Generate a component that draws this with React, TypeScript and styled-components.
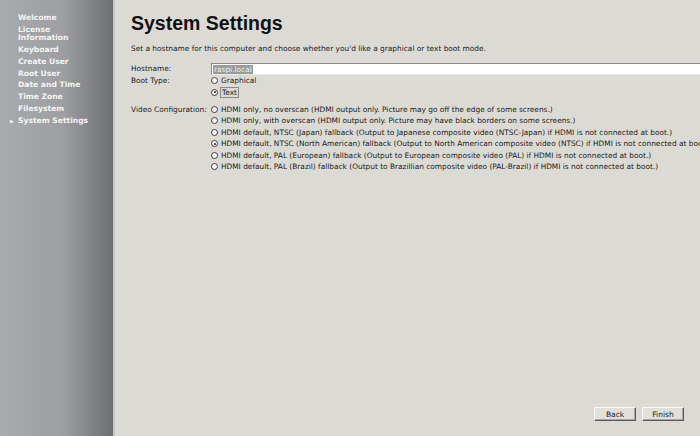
import React from "react";
import styled, { createGlobalStyle } from "styled-components";

const Global = createGlobalStyle`
  html, body { margin: 0; padding: 0; overflow: hidden; }
  body { background: #dcdad5; font-family: "DejaVu Sans", sans-serif; }
`;

const Window = styled.div`
  display: flex;
  width: 700px;
  height: 436px;
  overflow: hidden;
`;

const Sidebar = styled.nav`
  flex: 0 0 115px;
  background: linear-gradient(to right, #a8abae 0%, #9d9fa2 55%, #6d6e72 100%);
  border-right: 2px solid #c4c4c0;
  padding-top: 14px;
  box-sizing: border-box;
  display: flex;
  flex-direction: column;
  gap: 3.4px;
`;

const NavItem = styled.div<{ $active?: boolean }>`
  position: relative;
  padding-left: 18px;
  padding-right: 20px;
  color: #f4f4f4;
  font-weight: bold;
  font-size: 7.6px;
  line-height: 8.4px;
`;

const Arrow = styled.span`
  position: absolute;
  left: 10px;
  top: 0;
  font-size: 5px;
  color: #f4f4f4;
`;

const Main = styled.main`
  flex: 1;
  min-width: 0;
  padding: 11px 0 0 16px;
  display: flex;
  flex-direction: column;
  color: #1a1a1a;
  font-size: 7.4px;
  white-space: nowrap;
`;

const Title = styled.h1`
  margin: 0;
  font-family: "Liberation Sans", Arial, sans-serif;
  font-weight: bold;
  font-size: 19.5px;
  line-height: 24px;
  color: #111;
`;

const Description = styled.p`
  margin: 9px 0 0;
  line-height: 10px;
`;

const Form = styled.div`
  margin-top: 9px;
  display: grid;
  grid-template-columns: 80px 1fr;
  row-gap: 0;
  align-items: start;
`;

const Label = styled.div<{ $gap?: number }>`
  line-height: 11.4px;
  margin-top: ${(p) => p.$gap ?? 0}px;
`;

const Field = styled.div`
  height: 12px;
  box-sizing: border-box;
  background: #fff;
  border-top: 1px solid #888;
  border-left: 1px solid #888;
  border-bottom: 1px solid #e8e8e8;
  margin-right: -20px;
  display: flex;
  align-items: center;
  padding-left: 1px;
`;

const Selected = styled.span`
  background: #9b9b9b;
  color: #f0f0f0;
  line-height: 9px;
  padding: 0 1px;
`;

const Options = styled.div<{ $gap?: number }>`
  display: flex;
  flex-direction: column;
  margin-top: ${(p) => p.$gap ?? 0}px;
`;

const Option = styled.div`
  display: flex;
  align-items: center;
  height: 11.4px;
  gap: 3px;
`;

const Radio = styled.span<{ $on?: boolean }>`
  position: relative;
  width: 7px;
  height: 7px;
  box-sizing: border-box;
  border-radius: 50%;
  border: 1px solid #3a3a3a;
  background: #fff;
  flex: none;
  &::after {
    content: "";
    display: ${(p) => (p.$on ? "block" : "none")};
    position: absolute;
    left: 1.5px;
    top: 1.5px;
    width: 2px;
    height: 2px;
    border-radius: 50%;
    background: #222;
  }
`;

const OptionText = styled.span<{ $focus?: boolean }>`
  ${(p) => (p.$focus ? "outline: 1px solid #8a8a8a; outline-offset: 0px; padding: 0 1px;" : "")}
  line-height: 9px;
`;

const Spacer = styled.div`
  flex: 1;
`;

const ButtonRow = styled.div`
  display: flex;
  justify-content: flex-end;
  gap: 6px;
  padding: 0 16px 15px 0;
`;

const Button = styled.button`
  width: 42px;
  height: 14px;
  box-sizing: border-box;
  background: #e2e0dc;
  border: 1px solid;
  border-color: #f8f8f6 #5a5a5a #5a5a5a #f8f8f6;
  box-shadow: inset -1px -1px 0 #a8a6a2;
  font-family: "DejaVu Sans", sans-serif;
  font-size: 7.5px;
  color: #1a1a1a;
  padding: 0;
`;

const navItems = [
  "Welcome",
  "License Information",
  "Keyboard",
  "Create User",
  "Root User",
  "Date and Time",
  "Time Zone",
  "Filesystem",
  "System Settings",
];

const videoOptions = [
  "HDMI only, no overscan (HDMI output only. Picture may go off the edge of some screens.)",
  "HDMI only, with overscan (HDMI output only. Picture may have black borders on some screens.)",
  "HDMI default, NTSC (Japan) fallback (Output to Japanese composite video (NTSC-Japan) if HDMI is not connected at boot.)",
  "HDMI default, NTSC (North American) fallback (Output to North American composite video (NTSC) if HDMI is not connected at boot.)",
  "HDMI default, PAL (European) fallback (Output to European composite video (PAL) if HDMI is not connected at boot.)",
  "HDMI default, PAL (Brazil) fallback (Output to Brazillian composite video (PAL-Brazil) if HDMI is not connected at boot.)",
];

export default function App() {
  return (
    <>
      <Global />
      <Window>
        <Sidebar>
          {navItems.map((n) => (
            <NavItem key={n} $active={n === "System Settings"}>
              {n === "System Settings" && <Arrow>▶</Arrow>}
              {n}
            </NavItem>
          ))}
        </Sidebar>
        <Main>
          <Title>System Settings</Title>
          <Description>
            Set a hostname for this computer and choose whether you'd like a graphical or text boot mode.
          </Description>
          <Form>
            <Label>Hostname:</Label>
            <Field>
              <Selected>raspi.local</Selected>
            </Field>
            <Label>Boot Type:</Label>
            <Options>
              <Option>
                <Radio />
                <OptionText>Graphical</OptionText>
              </Option>
              <Option>
                <Radio $on />
                <OptionText $focus>Text</OptionText>
              </Option>
            </Options>
            <Label $gap={6}>Video Configuration:</Label>
            <Options $gap={6}>
              {videoOptions.map((o, i) => (
                <Option key={i}>
                  <Radio $on={i === 3} />
                  <OptionText>{o}</OptionText>
                </Option>
              ))}
            </Options>
          </Form>
          <Spacer />
          <ButtonRow>
            <Button>Back</Button>
            <Button>Finish</Button>
          </ButtonRow>
        </Main>
      </Window>
    </>
  );
}
